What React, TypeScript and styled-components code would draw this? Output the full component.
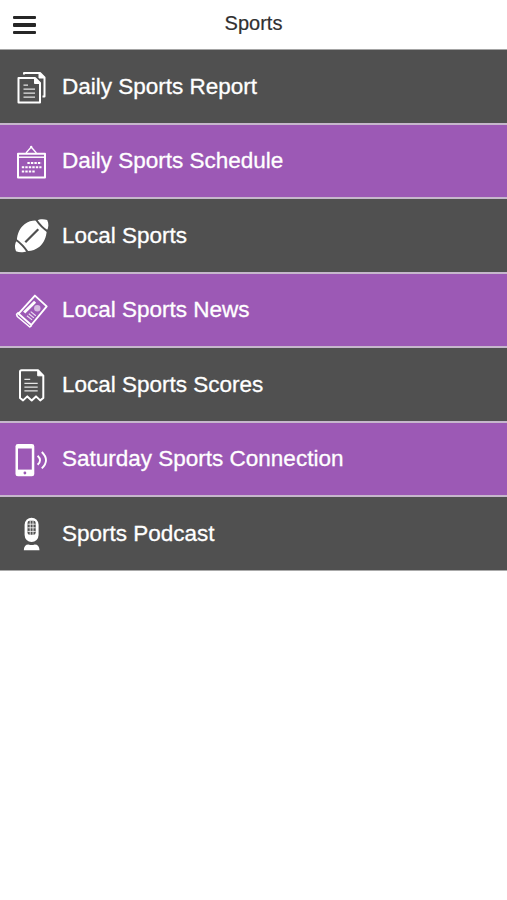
import React from "react";
import styled, { createGlobalStyle } from "styled-components";

const GlobalStyle = createGlobalStyle`
  body { margin: 0; background: #fff; font-family: "Liberation Sans", Arial, sans-serif; }
`;

const GREY = "#505050";
const PURPLE = "#9c59b5";

const Page = styled.div`
  min-height: 900px;
  background: #fff;
`;

const Header = styled.header`
  display: grid;
  grid-template-columns: 60px 1fr 60px;
  align-items: center;
  height: 49px;
  border-bottom: 1px solid #a4a4a4;
`;

const MenuButton = styled.button`
  display: flex;
  flex-direction: column;
  gap: 4px;
  width: 23px;
  margin: 1px 0 0 13px;
  padding: 0;
  border: 0;
  background: none;
`;

const Bar = styled.span`
  height: 3.5px;
  border-radius: 1px;
  background: #262626;
`;

const Title = styled.h1`
  margin: 0;
  padding-bottom: 3px;
  text-align: center;
  font-size: 20px;
  font-weight: 400;
  line-height: 24px;
  color: #303030;
  -webkit-text-stroke: 0.2px #303030;
`;

const List = styled.ul`
  margin: 0;
  padding: 0;
  list-style: none;
`;

const Row = styled.li<{ $color: string }>`
  display: flex;
  align-items: center;
  box-sizing: border-box;
  height: 74.5px;
  padding: 2px 0 0 14px;
  gap: 12px;
  color: #fff;
  background: ${(p) => p.$color};
  border-bottom: 2px solid #c6b7cc;

  &:last-child { height: 73.5px; border-bottom: 1px solid #aaa; }
`;

const Label = styled.span`
  font-size: 22.5px;
  line-height: 28px;
  white-space: nowrap;
  padding-bottom: 1px;
  -webkit-text-stroke: 0.3px #fff;
`;

const Icon = styled.svg.attrs({ viewBox: "0 0 36 36" })`
  flex: none;
  width: 36px;
  height: 36px;
  fill: none;
  stroke: #fff;
  stroke-width: 2;
  stroke-linejoin: round;
`;

const Report = () => (
  <Icon>
    <path d="M10 5.5V4H26L30.5 8.5V27.5H28.5" />
    <path d="M25 4v5h5.5z" fill="#fff" strokeWidth="1" />
    <path d="M4.5 9H21L26 14V33.5H4.5z" />
    <path d="M20.5 9v5.5H26z" fill="#fff" strokeWidth="1" />
    <path d="M9.5 16.2h4.5M9.5 20.2H21M9.5 24.2H21M9.5 28.2H21" strokeWidth="1.2" strokeOpacity=".85" />
  </Icon>
);

const Schedule = () => (
  <Icon>
    <path d="M12 9l5.2-6 5.2 6" strokeWidth="1.3" />
    <circle cx="17.2" cy="3" r="1.2" fill="#fff" stroke="none" />
    <path d="M4 9.7H31V33.5H4z" />
    <path d="M4 13.2H31" strokeWidth="1.5" />
    <g strokeWidth="2.1" strokeDasharray="2.4 1.1">
      <path d="M13.4 19H27.5M7.8 23.3H27.5M7.8 27.5H21.7" />
    </g>
  </Icon>
);

const Football = ({ color }: { color: string }) => (
  <Icon>
    <path d="M2 33.2C.3 29 .8 25.5 2.8 22.5 3.2 15.5 6 9.8 10.5 6.3 14.5 3.2 19 2.3 22.8 2.6 26 .7 30 .8 33.2 2 34.9 5.5 34.8 9.5 32.8 12.6 32.2 19.5 30 25 25.5 28.8 21.5 32 17 33.2 12.8 32.9 9.5 34.8 5.5 34.7 2 33.2z" fill="#fff" stroke="none" />
    <path d="M1.5 21.5Q8.5 26.3 14 34.5M22 1.5Q27 9 34 13.6" stroke={color} strokeWidth="2" />
    <path d="M11.3 24.2L24.3 11.3" stroke={color} strokeWidth="2.2" />
  </Icon>
);

const News = () => (
  <Icon>
    <path d="M20.9 2.6L32.7 13.4 17.3 32 4.6 20.7z" strokeWidth="1.9" />
    <path d="M4.6 19.2L2.6 21.3 3.3 23.5 15.8 34 17.8 32.3" strokeWidth="1.6" />
    <path d="M10.2 19.5L21.1 8.8" strokeWidth="3" />
    <circle cx="23.3" cy="15.2" r="3.2" fill="#fff" fillOpacity=".6" stroke="none" />
    <path d="M12.9 22.8L18.1 26.9M14.8 20.7L19.9 24.9M16.7 18.6L21.8 22.8" strokeWidth="1.2" strokeOpacity=".8" />
  </Icon>
);

const Scores = () => (
  <Icon>
    <path d="M6 31V4.8Q6 3.3 7.5 3.3H24L29.3 8.6V31L26.2 33.4 22 29.4 17.7 33.4 13.3 29.4 9.1 33.4z" />
    <path d="M23.7 3.5v5.3h5.3z" fill="#fff" strokeWidth="1" />
    <path d="M10.4 12.3h5.8M10.4 16.3H23.7M10.4 20.1H23.7M10.4 23.9H23.7" strokeWidth="1.2" strokeOpacity=".85" />
  </Icon>
);

const Phone = ({ color }: { color: string }) => (
  <Icon>
    <rect x="1.5" y="2" width="18.8" height="32.3" rx="2.4" fill="#fff" stroke="none" />
    <path d="M4 6.5H17.8V27.6H4z" fill={color} stroke="none" />
    <circle cx="10.9" cy="31" r="1.4" fill={color} stroke="none" />
    <path d="M23.6 13.8Q28.5 18.2 23.6 22.8M27.8 10Q36.2 18.2 27.8 26.4" strokeWidth="1.9" />
  </Icon>
);

const Podcast = ({ color }: { color: string }) => (
  <Icon>
    <rect x="10.6" y="1.8" width="14" height="24.2" rx="7" fill="#fff" stroke="none" />
    <rect x="13.5" y="4.8" width="8.2" height="14" rx="2.2" fill={color} stroke="none" />
    <path d="M16.2 4.8V19M19 4.8V19M13.5 8.2h8.2M13.5 11.8h8.2M13.5 15.4h8.2" strokeWidth=".9" strokeOpacity=".9" />
    <path d="M9.8 34.2Q10 28.5 14.5 28.5 17.6 29.7 20.7 28.5 25.3 28.5 25.5 34.2z" fill="#fff" stroke="none" />
  </Icon>
);

const items = [
  { label: "Daily Sports Report", icon: Report },
  { label: "Daily Sports Schedule", icon: Schedule },
  { label: "Local Sports", icon: Football },
  { label: "Local Sports News", icon: News },
  { label: "Local Sports Scores", icon: Scores },
  { label: "Saturday Sports Connection", icon: Phone },
  { label: "Sports Podcast", icon: Podcast },
];

export default function App() {
  return (
    <Page>
      <GlobalStyle />
      <Header>
        <MenuButton aria-label="Menu">
          <Bar />
          <Bar />
          <Bar />
        </MenuButton>
        <Title>Sports</Title>
      </Header>
      <List>
        {items.map(({ label, icon: Glyph }, i) => {
          const color = i % 2 ? PURPLE : GREY;
          return (
            <Row key={label} $color={color}>
              <Glyph color={color} />
              <Label>{label}</Label>
            </Row>
          );
        })}
      </List>
    </Page>
  );
}
